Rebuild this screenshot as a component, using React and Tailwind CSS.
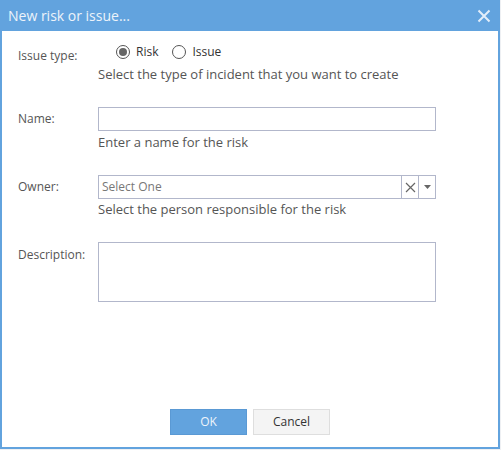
export default function App() {
  const font = { fontFamily: '"Open Sans", "Noto Sans", sans-serif' };

  return (
    <div className="w-[501px] h-[450px] bg-[#eef0f3]" style={font}>
      <div className="w-[500px] h-[449px] flex flex-col bg-white border-2 border-t-0 border-[#62a3de]">
        {/* title bar */}
        <div className="h-[31px] -mx-[2px] bg-[#62a3de] flex items-center justify-between pl-[8px] pr-[8px]">
          <span className="text-[14px] text-[#edf3fa] leading-none">New risk or issue...</span>
          <svg width="14" height="14" viewBox="0 0 14 14" className="mr-[1px]">
            <path d="M1.5 1.5 L12.5 12.5 M12.5 1.5 L1.5 12.5" stroke="#e3eefa" strokeWidth="2" />
          </svg>
        </div>

        <div className="flex-1 flex flex-col text-[12px] text-[#555]">
          {/* issue type */}
          <div className="flex mt-[11px]">
            <div className="w-[96px] pl-[16px] pt-[4px] leading-[20px]">Issue type:</div>
            <div className="flex flex-col">
              <div className="flex items-center h-[20px] ml-[18px] text-[#333]">
                <span className="w-[14px] h-[14px] rounded-full border border-[#555] flex items-center justify-center">
                  <span className="w-[8px] h-[8px] rounded-full bg-[#666]" />
                </span>
                <span className="ml-[6px]">Risk</span>
                <span className="ml-[14px] w-[14px] h-[14px] rounded-full border border-[#555]" />
                <span className="ml-[6px]">Issue</span>
              </div>
              <div className="h-[16px] leading-[16px] mt-[4px] text-[13px]">Select the type of incident that you want to create</div>
            </div>
          </div>

          {/* name */}
          <div className="flex mt-[25px]">
            <div className="w-[96px] pl-[16px] h-[24px] leading-[24px]">Name:</div>
            <div className="flex flex-col">
              <div className="w-[338px] h-[24px] border border-[#b2b7cb]" />
              <div className="h-[16px] leading-[16px] mt-[3px] text-[13px]">Enter a name for the risk</div>
            </div>
          </div>

          {/* owner */}
          <div className="flex mt-[25px]">
            <div className="w-[96px] pl-[16px] h-[24px] leading-[24px]">Owner:</div>
            <div className="flex flex-col">
              <div className="w-[338px] h-[24px] border border-[#b2b7cb] flex">
                <div className="flex-1 pl-[3px] leading-[22px] text-[#777]">Select One</div>
                <div className="w-[17px] border-l border-[#b2b7cb] flex items-center justify-center">
                  <svg width="11" height="11" viewBox="0 0 11 11">
                    <path d="M1 1 L10 10 M10 1 L1 10" stroke="#666" strokeWidth="1.2" />
                  </svg>
                </div>
                <div className="w-[17px] border-l border-[#b2b7cb] flex items-center justify-center">
                  <svg width="7" height="4" viewBox="0 0 7 4">
                    <path d="M0 0 L7 0 L3.5 4 Z" fill="#666" />
                  </svg>
                </div>
              </div>
              <div className="h-[16px] leading-[16px] mt-[2px] text-[13px]">Select the person responsible for the risk</div>
            </div>
          </div>

          {/* description */}
          <div className="flex mt-[25px]">
            <div className="w-[96px] pl-[16px] pt-[5px] leading-[16px]">Description:</div>
            <div className="w-[338px] h-[60px] border border-[#b2b7cb]" />
          </div>

          <div className="flex-1" />

          {/* buttons */}
          <div className="flex justify-center gap-[6px] mb-[12px]">
            <button className="w-[77px] h-[26px] bg-[#62a3de] border border-[#5a99d4] text-[#eef4fb] text-[12px]">OK</button>
            <button className="w-[77px] h-[26px] bg-[#f4f4f4] border border-[#dedede] text-[#333] text-[12px]">Cancel</button>
          </div>
        </div>
      </div>
    </div>
  );
}
